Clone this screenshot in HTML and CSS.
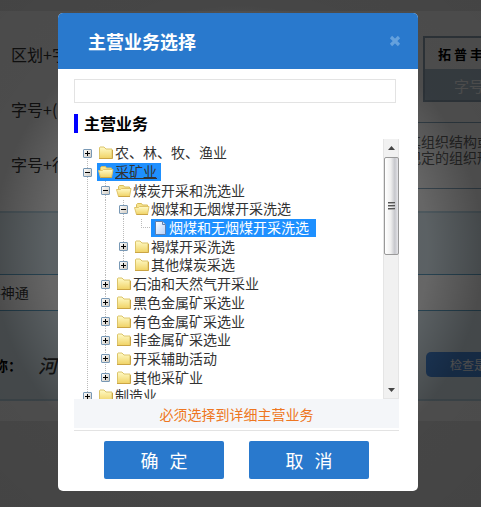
FILE: index.html
```html
<!DOCTYPE html>
<html lang="zh-CN">
<head>
<meta charset="utf-8">
<title>主营业务选择</title>
<link rel="stylesheet" href="styles.css">
</head>
<body>
<svg class="defs" width="0" height="0">
  <defs>
    <linearGradient id="gold" x1="0" y1="0" x2="0" y2="1"><stop offset="0" stop-color="#fffbc8"/><stop offset="1" stop-color="#f0d264"/></linearGradient>
    <linearGradient id="sheet" x1="0" y1="0" x2="1" y2="1"><stop offset="0" stop-color="#fff"/><stop offset="1" stop-color="#b4d0fa"/></linearGradient>
    <linearGradient id="box" x1="0" y1="0" x2="1" y2="1"><stop offset="0" stop-color="#fff"/><stop offset="1" stop-color="#cdc8bf"/></linearGradient>
  </defs>
  <symbol id="closed" viewBox="0 0 16 14"><path d="M1.500 12.500v-11l.5-.5h4l2 2h6v9.500z" fill="url(#gold)" stroke="#dcc46a"/><path d="M1 12.500h13.500V4" fill="none" stroke="#cba544"/></symbol>
  <symbol id="open" viewBox="0 0 16 14"><path d="M2.500 12V2.500l1-1h4l1 1.500h5V7" fill="#f6e38c" stroke="#d9bd5b"/><path d="M.5 5.500h4l1-1h9.500l-1.500 8h-11z" fill="url(#gold)" stroke="#e0c46a"/><path d="M2.500 12.500h11.500" stroke="#cba544"/></symbol>
  <symbol id="page" viewBox="0 0 16 16"><path d="M3.500 1.500h7l3 3v10h-10z" fill="url(#sheet)" stroke="#5f7fae"/><path d="M10.500 1.500v3h3" fill="#dce9fc" stroke="#5f7fae"/></symbol>
  <symbol id="plus" viewBox="0 0 9 9"><rect x=".5" y=".5" width="8" height="8" rx=".5" fill="url(#box)" stroke="#7898b5"/><path d="M2 4.500h5M4.500 2v5" stroke="#000"/></symbol>
  <symbol id="minus" viewBox="0 0 9 9"><rect x=".5" y=".5" width="8" height="8" rx=".5" fill="url(#box)" stroke="#7898b5"/><path d="M2 4.500h5" stroke="#000"/></symbol>
</svg>

<div class="site">
  <div class="intro">
    <ul class="rules"><li>区划+字</li><li>字号+(</li><li>字号+行</li></ul>
    <div class="side">
      <div class="sample"><div class="brush">拓普丰</div><div class="sample-name">字号</div></div>
      <p class="note"><span>其组织结构或</span><span>规定的组织形</span></p>
    </div>
  </div>
  <div class="band band-top"></div>
  <div class="value">-神通</div>
  <div class="band band-name"><b class="label">称：</b><span class="he">河</span><span class="check">检查是</span></div>
  <div class="tail"></div>
</div>

<div class="mask">
  <div class="dialog">
    <div class="head"><span>主营业务选择</span>
      <svg class="close" viewBox="0 0 12 12"><path d="M2 2l8 8M10 2l-8 8" stroke="#64a1dd" stroke-width="3.200"/></svg>
    </div>
    <div class="content">
      <input class="search" type="text" aria-label="search">
      <h2 class="title">主营业务</h2>
      <div class="pane">
        <div class="tree">
          <div class="row first"><svg class="sw"><use href="#plus"/></svg><span class="node"><svg class="ic"><use href="#closed"/></svg><span>农、林、牧、渔业</span></span></div>
          <div class="row"><svg class="sw"><use href="#minus"/></svg><span class="node picked"><svg class="ic"><use href="#open"/></svg><u>采矿业</u></span></div>
          <div class="kids">
            <div class="row"><svg class="sw"><use href="#minus"/></svg><span class="node"><svg class="ic"><use href="#open"/></svg><span>煤炭开采和洗选业</span></span></div>
            <div class="kids">
              <div class="row"><svg class="sw"><use href="#minus"/></svg><span class="node"><svg class="ic"><use href="#open"/></svg><span>烟煤和无烟煤开采洗选</span></span></div>
              <div class="row leaf"><i class="elbow"></i><span class="node picked current"><svg class="ic"><use href="#page"/></svg><span>烟煤和无烟煤开采洗选</span></span></div>
              <div class="row"><svg class="sw"><use href="#plus"/></svg><span class="node"><svg class="ic"><use href="#closed"/></svg><span>褐煤开采洗选</span></span></div>
              <div class="row last"><svg class="sw"><use href="#plus"/></svg><span class="node"><svg class="ic"><use href="#closed"/></svg><span>其他煤炭采选</span></span></div>
            </div>
            <div class="row"><svg class="sw"><use href="#plus"/></svg><span class="node"><svg class="ic"><use href="#closed"/></svg><span>石油和天然气开采业</span></span></div>
            <div class="row"><svg class="sw"><use href="#plus"/></svg><span class="node"><svg class="ic"><use href="#closed"/></svg><span>黑色金属矿采选业</span></span></div>
            <div class="row"><svg class="sw"><use href="#plus"/></svg><span class="node"><svg class="ic"><use href="#closed"/></svg><span>有色金属矿采选业</span></span></div>
            <div class="row"><svg class="sw"><use href="#plus"/></svg><span class="node"><svg class="ic"><use href="#closed"/></svg><span>非金属矿采选业</span></span></div>
            <div class="row"><svg class="sw"><use href="#plus"/></svg><span class="node"><svg class="ic"><use href="#closed"/></svg><span>开采辅助活动</span></span></div>
            <div class="row last"><svg class="sw"><use href="#plus"/></svg><span class="node"><svg class="ic"><use href="#closed"/></svg><span>其他采矿业</span></span></div>
          </div>
          <div class="row"><svg class="sw"><use href="#plus"/></svg><span class="node"><svg class="ic"><use href="#closed"/></svg><span>制造业</span></span></div>
        </div>
        <div class="bar">
          <svg class="arrow" viewBox="0 0 7 4"><path d="M0 4L3.500 0 7 4z" fill="#444"/></svg>
          <div class="thumb"><i></i><i></i><i></i></div>
          <svg class="arrow down" viewBox="0 0 7 4"><path d="M0 0h7L3.500 4z" fill="#444"/></svg>
        </div>
      </div>
      <p class="hint">必须选择到详细主营业务</p>
      <div class="actions"><button><span>确</span><span>定</span></button><button><span>取</span><span>消</span></button></div>
    </div>
  </div>
</div>
</body>
</html>
```

FILE: styles.css
```css
* { box-sizing: border-box; }
body {
  margin: 0;
  height: 507px;
  overflow: hidden;
  background: #eaeaea;
  color: #333;
  font: 14px/18px "Noto Sans CJK SC", sans-serif;
}
.defs { position: absolute; }

/* Page behind the dialog */
.site { padding-top: 11px; }
.intro {
  display: flex;
  justify-content: space-between;
  height: 200px;
  background: #fff;
}
.rules {
  margin: 0;
  padding: 16px 0 0 11px;
  list-style: none;
  font-size: 16px;
  line-height: 55px;
  white-space: nowrap;
}
.side { width: 66px; white-space: nowrap; }
.sample {
  height: 66px;
  margin: 25px 0 20px 8px;
  border: 2px solid #91a5b6;
  border-right: 0;
  background: #afc3d2;
}
.brush {
  height: 31px;
  padding-left: 13px;
  background: #fff;
  color: #000;
  font: bold 13px/32px "Noto Sans CJK SC", serif;
  letter-spacing: 3px;
}
.sample-name { padding: 8px 0 0 29px; color: #fff; font-size: 15px; }
.note {
  display: flex;
  flex-direction: column;
  height: 67px;
  margin: 0;
  border: solid #88a9c0;
  border-width: 1px 0;
  padding: 10px 0 0;
  color: #666;
  line-height: 16px;
}
.note span { margin-left: -8px; }
.band { background: #e4f2f9; border: solid #c0dbe9; }
.band-top { height: 63px; border-width: 2px 0 0; }
.value {
  height: 37px;
  border: solid #61a5c9;
  border-width: 1px 0;
  background: #fff;
  line-height: 34px;
  text-indent: -4px;
}
.band-name {
  display: flex;
  align-items: center;
  height: 90px;
  border-width: 0 0 2px;
  padding-top: 19px;
}
.label { width: 39px; margin-left: -6px; color: #000; }
.he { margin-left: 5px; font: italic 500 19px/24px "Noto Sans CJK SC", sans-serif; }
.check {
  width: 70px;
  height: 25px;
  margin: 0 -15px 0 auto;
  padding-left: 24px;
  border-radius: 5px;
  background: #488ce0;
  color: #fff;
  font-size: 12px;
  line-height: 25px;
  white-space: nowrap;
}
.tail { height: 20px; background: #fff; }

/* Modal */
.mask {
  position: absolute;
  inset: 0;
  padding: 13px 0 0 58px;
  background: radial-gradient(circle at 238px 250px, rgba(0,0,0,.58) 0, rgba(0,0,0,.6) 190px, rgba(0,0,0,.7) 245px, rgba(0,0,0,.71) 360px);
}
.dialog {
  width: 360px;
  height: 478px;
  overflow: hidden;
  border-radius: 5px;
  background: #fff;
}
.head {
  display: flex;
  align-items: center;
  justify-content: space-between;
  height: 56px;
  padding: 0 17px 0 30px;
  background: #2979cd;
  color: #fff;
  font-size: 18px;
  font-weight: bold;
}
.close { width: 12px; height: 12px; }
.content { padding: 10px 19px 0 15px; }
.search {
  display: block;
  width: 322px;
  height: 24px;
  margin: 0 0 11px 1px;
  border: 1px solid #e3e3e3;
}
.title {
  height: 19px;
  margin: 0 0 6px 1px;
  padding-left: 6px;
  border-left: 4px solid #00f;
  color: #000;
  font-size: 16px;
  line-height: 19px;
}
.pane { display: flex; justify-content: space-between; height: 260px; overflow: hidden; }
.tree { width: 310px; padding: 5px 0 0 10px; }
.row {
  display: flex;
  align-items: center;
  height: 18.7px;
  background: repeating-linear-gradient(#bbb 0 1px, transparent 1px 2px) 4px 0 / 1px 100% no-repeat;
}
.row.first { background-size: 1px 50%; background-position: 4px 100%; }
.row.last { background-size: 1px 50%; }
.sw {
  flex: none;
  width: 9px;
  height: 9px;
  margin-right: 5px;
  overflow: visible;
}
.sw + .node {
  background-clip: border-box;
}
.node {
  display: flex;
  align-items: center;
  height: 18px;
  padding: 0 4px 0 1px;
  color: #333;
  white-space: nowrap;
}
.node > :last-child { margin-bottom: 2px; }
.node u { text-underline-offset: 1px; text-decoration-thickness: 1px; }
.ic { flex: none; width: 16px; height: 14px; margin-right: 1px; }
.picked { background: #1e90ff; }
.current { padding: 0 7px 0 1px; color: #fff; }
.current .ic { height: 16px; }
.kids {
  padding-left: 18px;
  background: repeating-linear-gradient(#bbb 0 1px, transparent 1px 2px) 4px 0 / 1px 100% no-repeat;
}
.leaf { padding-left: 22px; }
.elbow {
  width: 9px;
  height: 9px;
  margin: -9px 1px 0 0;
  border: dotted #bbb;
  border-width: 0 0 1px 1px;
}
.bar {
  display: flex;
  flex-direction: column;
  align-items: center;
  width: 16px;
  border: 1px solid #e5e5e5;
  border-top: 0;
  background: #f1f1f1;
}
.arrow { width: 7px; height: 4px; margin: 7px 0; }
.down { margin: auto 0 6px; }
.thumb {
  display: flex;
  flex-direction: column;
  align-items: center;
  justify-content: center;
  gap: 1px;
  width: 15px;
  height: 98px;
  border: 1px solid #999;
  border-radius: 2px;
  background: linear-gradient(90deg, #fff, #eee 45%, #c6c7cc 75%, #e5e5e9);
}
.thumb i { width: 7px; height: 2px; border-top: 1px solid #555; background: #aaa; }
.hint {
  width: 325px;
  height: 29px;
  margin: 0 0 2px 1px;
  background: #f4f6f9;
  color: #ee7621;
  line-height: 31px;
  text-align: center;
}
.actions {
  display: flex;
  gap: 25px;
  width: 325px;
  margin-left: 1px;
  padding: 10px 0 0 30px;
  border-top: 1px solid #e3e3e3;
}
.actions button {
  display: flex;
  align-items: center;
  justify-content: center;
  gap: 11px;
  width: 120px;
  height: 38px;
  padding: 0;
  border: 0;
  border-radius: 2px;
  background: #2979cd;
  color: #fff;
  font: 18px/38px "Noto Sans CJK SC", sans-serif;
}
```
